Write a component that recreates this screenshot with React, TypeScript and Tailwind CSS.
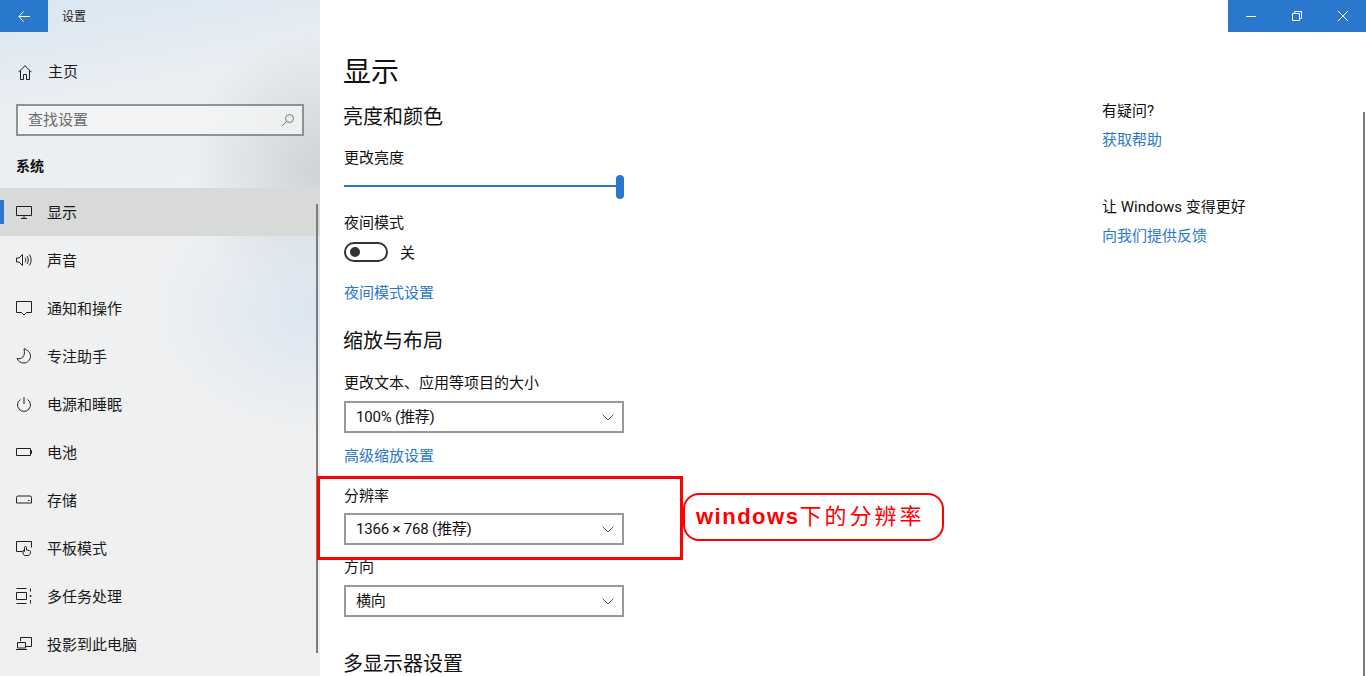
import type { ReactNode } from "react";

const FONT = "font-['Roboto','Noto_Sans_CJK_SC',sans-serif]";

function Ico({ children }: { children: ReactNode }) {
  return (
    <svg width="16" height="16" viewBox="0 0 16 16" fill="none" stroke="#1f1f1f" strokeWidth="1" className="shrink-0">
      {children}
    </svg>
  );
}

const navItems: { label: string; icon: ReactNode }[] = [
  {
    label: "显示",
    icon: (
      <>
        <path d="M0.500 2.500h15v9h-15z" />
        <path d="M5 14.500h6M8 11.500v3" />
      </>
    ),
  },
  {
    label: "声音",
    icon: (
      <>
        <path d="M0.500 6h2.500l3.500-3.500v11L3 10H0.500z" />
        <path d="M9 5.500c1 1.500 1 3.500 0 5M11 4c1.700 2.400 1.700 5.600 0 8M13.300 2.500c2.400 3.200 2.400 7.800 0 11" />
      </>
    ),
  },
  {
    label: "通知和操作",
    icon: <path d="M0.500 1.500h15v11h-5L8 15l-2.500-2.500h-5z" />,
  },
  {
    label: "专注助手",
    icon: <path d="M8 0.800c3 .6 6.500 3.400 6.500 7.400 0 3.600-3 6.800-6.600 6.800-3.200 0-5.800-1.800-6.900-4.600 4.200 1.400 9-1.800 7-9.600z" />,
  },
  {
    label: "电源和睡眠",
    icon: (
      <>
        <path d="M8 1v7" />
        <path d="M4.500 3.400a6.500 6.500 0 1 0 7 0" />
      </>
    ),
  },
  {
    label: "电池",
    icon: (
      <>
        <path d="M0.500 4.500h14v7h-14z" />
        <path d="M14.500 6.500h1v3h-1" />
      </>
    ),
  },
  {
    label: "存储",
    icon: (
      <>
        <path d="M0.500 5.500q0-1.500 1.500-1.500h12q1.500 0 1.500 1.500v5.500H.5z" />
        <path d="M12 8.500h1.500" />
      </>
    ),
  },
  {
    label: "平板模式",
    icon: (
      <>
        <path d="M6.500 11.500H.5v-10h15v6" />
        <path d="M9 15.500c-1 0-2-1.300-2-2.500v-2.500h1.500v1V7.500a1 1 0 0 1 2 0v2.500l3 .5c.7.1 1 .6 1 1.200 0 2-.8 3.800-2.500 3.800z" />
      </>
    ),
  },
  {
    label: "多任务处理",
    icon: (
      <>
        <path d="M0.500 0.500h10M0.500 15.500h10M0.500 4.500h10v7h-10zM14.500 0.500v3M14.500 12v3.500" />
        <circle cx="14.500" cy="8" r="1" fill="#1f1f1f" stroke="none" />
      </>
    ),
  },
  {
    label: "投影到此电脑",
    icon: (
      <>
        <path d="M4.500 5V1.500h11v9H10" />
        <path d="M1.500 6.500h8V12h-8zM0 13.500h11" />
      </>
    ),
  },
];

function NavRow({ label, icon, active }: { label: string; icon: ReactNode; active?: boolean }) {
  return (
    <div className={`relative flex h-12 items-center pl-4 ${active ? "bg-[#d8d9d9]" : ""}`}>
      {active && <div className="absolute left-0 top-[12px] h-6 w-1 bg-[#2a78cd]" />}
      <Ico>{icon}</Ico>
      <span className="ml-[15px] mt-[2px] text-[15px] leading-[22px] text-[#1a1a1a]">{label}</span>
    </div>
  );
}

function Select({ value }: { value: string }) {
  return (
    <div className="flex h-8 w-[280px] items-center justify-between border-2 border-[#999999] pl-[10px] pr-[8px] text-[15px] tracking-[-0.2px] text-[#111]">
      <span>{value}</span>
      <svg width="12" height="7" viewBox="0 0 12 7" fill="none" stroke="#666" strokeWidth="1">
        <path d="M0.500 0.500 6 6l5.500-5.500" />
      </svg>
    </div>
  );
}

function Heading({ children, className }: { children: ReactNode; className: string }) {
  return <h2 className={`-ml-px h-7 text-[20px] leading-7 text-[#111] ${className}`}>{children}</h2>;
}

function Label({ children, className }: { children: ReactNode; className: string }) {
  return <p className={`h-5 text-[15px] leading-[20px] text-[#111] ${className}`}>{children}</p>;
}

function LinkText({ children, className }: { children: ReactNode; className: string }) {
  return <p className={`h-5 text-[15px] leading-[22px] text-[#2a78cd] ${className}`}>{children}</p>;
}

export default function App() {
  return (
    <div className={`relative flex h-[676px] w-[1366px] overflow-hidden bg-white ${FONT}`}>
      {/* Sidebar */}
      <aside className="relative w-[320px] shrink-0 bg-[radial-gradient(ellipse_180px_130px_at_320px_310px,#dbe6f1,transparent),radial-gradient(ellipse_130px_140px_at_320px_170px,#cfd3d5,transparent),linear-gradient(170deg,#d9e6f2_0%,#e9eef2_14%,#f0f1f2_40%,#efefef_100%)]">
        <div className="flex h-8 items-center">
          <div className="flex h-8 w-12 items-center justify-center bg-[#2a78cd]">
            <svg width="12" height="11" viewBox="0 0 12 11" fill="none" stroke="white" strokeWidth="1">
              <path d="M12 5.500H1M5.500 .5.800 5.500l4.700 5" />
            </svg>
          </div>
          <span className="ml-[14px] pt-[2px] text-[12px] text-[#1a1a1a]">设置</span>
        </div>
        <div className="mt-4 flex h-12 items-center pl-[18px]">
          <svg width="14" height="15" viewBox="0 0 14 15" fill="none" stroke="#1f1f1f" strokeWidth="1" className="shrink-0">
            <path d="M7 .7.500 7.200M7 .7l6.500 6.500M2.500 5.500v9h3v-5h3v5h3v-9" />
          </svg>
          <span className="ml-4 text-[15px] leading-[22px] text-[#1a1a1a]">主页</span>
        </div>
        <div className="mx-4 mt-2 flex h-8 items-center justify-between border-2 border-[#8f9191] bg-[#f5f6f6]/70 pl-[10px] pr-2">
          <span className="text-[15px] leading-[20px] text-[#6b6b6b]">查找设置</span>
          <svg width="12" height="12" viewBox="0 0 12 12" fill="none" stroke="#777" strokeWidth="1">
            <circle cx="7.500" cy="4.500" r="4" />
            <path d="M4.600 7.400.5 11.500" />
          </svg>
        </div>
        <div className="mt-[20px] h-[22px] pl-4 text-[14px] font-bold leading-5 text-[#111]">系统</div>
        <nav className="mt-[10px]">
          {navItems.map((item, i) => (
            <NavRow key={item.label} label={item.label} icon={item.icon} active={i === 0} />
          ))}
        </nav>
        <div className="absolute left-[316px] top-[204px] h-[449px] w-[2px] bg-[#7d7d7d]" />
      </aside>

      {/* Main */}
      <main className="flex flex-1 pl-6">
        <div className="w-[758px] shrink-0">
          <h1 className="-ml-px mt-[53px] h-10 text-[28px] leading-10 text-[#111]">显示</h1>
          <Heading className="mt-[10px]">亮度和颜色</Heading>
          <Label className="mt-[17px]">更改亮度</Label>
          <div className="relative mt-[7px] h-6 w-[280px]">
            <div className="absolute left-0 right-0 top-[10px] h-[2px] bg-[#2a78cd]" />
            <div className="absolute right-0 top-0 h-6 w-2 rounded-full bg-[#2a78cd]" />
          </div>
          <Label className="mt-[14px]">夜间模式</Label>
          <div className="mt-[9px] flex h-5 items-center">
            <div className="flex h-5 w-11 items-center rounded-full border-2 border-[#333] pl-[4px]">
              <div className="h-[10px] w-[10px] rounded-full bg-[#333]" />
            </div>
            <span className="ml-3 mt-[2px] text-[15px] leading-[22px] text-[#111]">关</span>
          </div>
          <LinkText className="mt-[20px]">夜间模式设置</LinkText>
          <Heading className="mt-[25px]">缩放与布局</Heading>
          <Label className="mt-[18px]">更改文本、应用等项目的大小</Label>
          <div className="mt-[8px]">
            <Select value="100% (推荐)" />
          </div>
          <LinkText className="mt-[12px]">高级缩放设置</LinkText>
          <Label className="mt-[21px]">分辨率</Label>
          <div className="mt-[7px]">
            <Select value="1366 × 768 (推荐)" />
          </div>
          <Label className="mt-[12px]">方向</Label>
          <div className="mt-[8px]">
            <Select value="横向" />
          </div>
          <Heading className="mt-[33px]">多显示器设置</Heading>
        </div>
        <div className="pt-[101px]">
          <Label className="">有疑问?</Label>
          <LinkText className="mt-[8px]">获取帮助</LinkText>
          <Label className="mt-[48px]">让 Windows 变得更好</Label>
          <LinkText className="mt-[8px]">向我们提供反馈</LinkText>
        </div>
      </main>

      {/* Window controls */}
      <div className="absolute right-0 top-0 flex h-8 w-[138px] bg-[#2a78cd]">
        <div className="flex flex-1 items-center justify-center">
          <svg width="10" height="10" viewBox="0 0 10 10" stroke="white" strokeWidth="1">
            <path d="M0 5.500h10" />
          </svg>
        </div>
        <div className="flex flex-1 items-center justify-center">
          <svg width="10" height="10" viewBox="0 0 10 10" fill="none" stroke="white" strokeWidth="1">
            <path d="M.5 2.500h7v7h-7zM2.500 2.500v-2h7v7h-2" />
          </svg>
        </div>
        <div className="flex flex-1 items-center justify-center">
          <svg width="10" height="10" viewBox="0 0 10 10" stroke="white" strokeWidth="1">
            <path d="M0 0l10 10M10 0 0 10" />
          </svg>
        </div>
      </div>

      {/* Right scrollbar */}
      <div className="absolute right-[1px] top-[112px] bottom-0 w-[2px] bg-[#7d7d7d]" />

      {/* Red annotation */}
      <div className="absolute left-[317px] top-[476px] h-[84px] w-[366px] border-[3px] border-[#ff0000]" />
      <div className="absolute left-[683px] top-[493px] flex h-[48px] w-[261px] items-center rounded-[16px] border-2 border-[#ff0000] pb-px pl-[11px] text-[22px] text-[#ff0000]">
        <span className="font-['Liberation_Sans','Noto_Sans_CJK_SC',sans-serif] font-bold tracking-[1.500px]">windows</span>
        <span className="tracking-[3px]">下的分辨率</span>
      </div>
    </div>
  );
}
